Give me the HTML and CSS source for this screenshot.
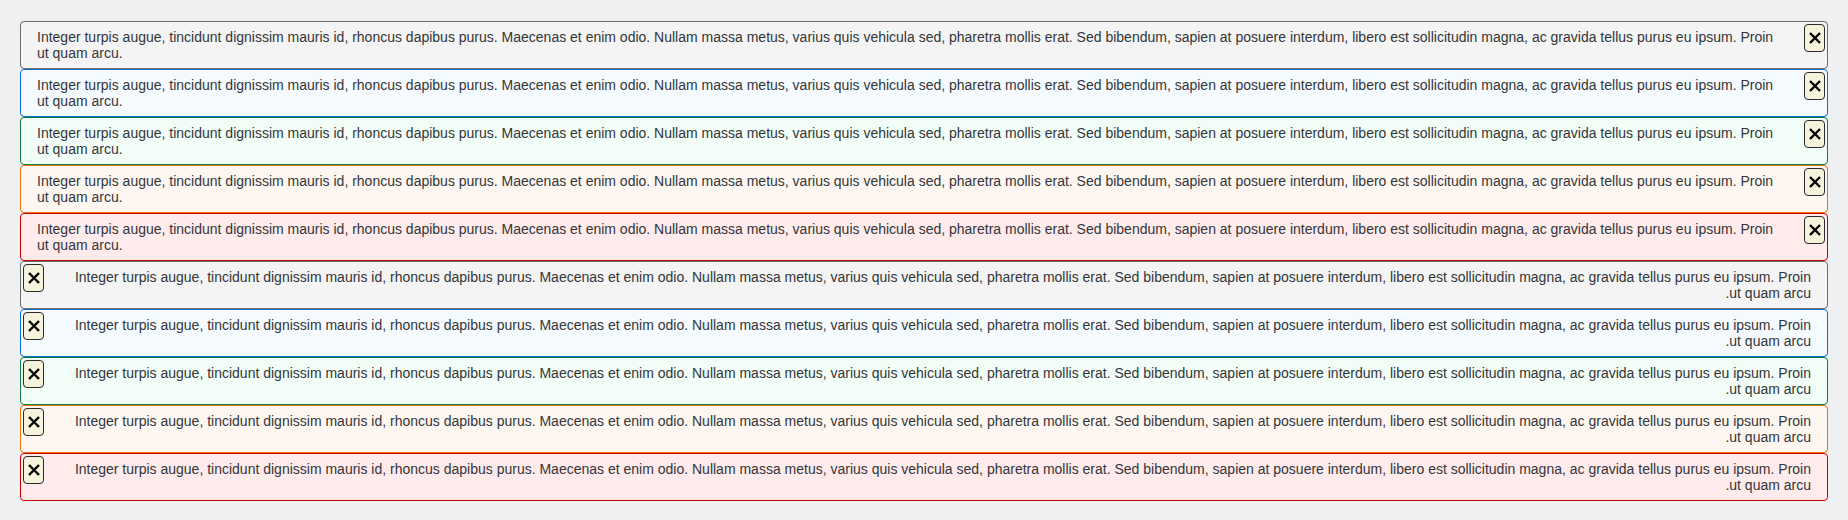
FILE: index.html
```html
<!DOCTYPE html>
<html lang="en">
<head>
<meta charset="utf-8">
<title>Message strips</title>
<link rel="stylesheet" href="styles.css">
</head>
<body>
<div class="page">
  <div class="strip neutral"><p class="text">Integer turpis augue, tincidunt dignissim mauris id, rhoncus dapibus purus. Maecenas et enim odio. Nullam massa metus, varius quis vehicula sed, pharetra mollis erat. Sed bibendum, sapien at posuere interdum, libero est sollicitudin magna, ac gravida tellus purus eu ipsum. Proin ut quam arcu.</p><button class="close" aria-label="Close"><svg viewBox="0 0 12 12" width="12" height="12"><path d="M1 1 L11 11 M11 1 L1 11" stroke="#000" stroke-width="2.4" fill="none"/></svg></button></div>
  <div class="strip info"><p class="text">Integer turpis augue, tincidunt dignissim mauris id, rhoncus dapibus purus. Maecenas et enim odio. Nullam massa metus, varius quis vehicula sed, pharetra mollis erat. Sed bibendum, sapien at posuere interdum, libero est sollicitudin magna, ac gravida tellus purus eu ipsum. Proin ut quam arcu.</p><button class="close" aria-label="Close"><svg viewBox="0 0 12 12" width="12" height="12"><path d="M1 1 L11 11 M11 1 L1 11" stroke="#000" stroke-width="2.4" fill="none"/></svg></button></div>
  <div class="strip success"><p class="text">Integer turpis augue, tincidunt dignissim mauris id, rhoncus dapibus purus. Maecenas et enim odio. Nullam massa metus, varius quis vehicula sed, pharetra mollis erat. Sed bibendum, sapien at posuere interdum, libero est sollicitudin magna, ac gravida tellus purus eu ipsum. Proin ut quam arcu.</p><button class="close" aria-label="Close"><svg viewBox="0 0 12 12" width="12" height="12"><path d="M1 1 L11 11 M11 1 L1 11" stroke="#000" stroke-width="2.4" fill="none"/></svg></button></div>
  <div class="strip warning"><p class="text">Integer turpis augue, tincidunt dignissim mauris id, rhoncus dapibus purus. Maecenas et enim odio. Nullam massa metus, varius quis vehicula sed, pharetra mollis erat. Sed bibendum, sapien at posuere interdum, libero est sollicitudin magna, ac gravida tellus purus eu ipsum. Proin ut quam arcu.</p><button class="close" aria-label="Close"><svg viewBox="0 0 12 12" width="12" height="12"><path d="M1 1 L11 11 M11 1 L1 11" stroke="#000" stroke-width="2.4" fill="none"/></svg></button></div>
  <div class="strip error"><p class="text">Integer turpis augue, tincidunt dignissim mauris id, rhoncus dapibus purus. Maecenas et enim odio. Nullam massa metus, varius quis vehicula sed, pharetra mollis erat. Sed bibendum, sapien at posuere interdum, libero est sollicitudin magna, ac gravida tellus purus eu ipsum. Proin ut quam arcu.</p><button class="close" aria-label="Close"><svg viewBox="0 0 12 12" width="12" height="12"><path d="M1 1 L11 11 M11 1 L1 11" stroke="#000" stroke-width="2.4" fill="none"/></svg></button></div>
  <div class="strip neutral rtl" dir="rtl"><p class="text">Integer turpis augue, tincidunt dignissim mauris id, rhoncus dapibus purus. Maecenas et enim odio. Nullam massa metus, varius quis vehicula sed, pharetra mollis erat. Sed bibendum, sapien at posuere interdum, libero est sollicitudin magna, ac gravida tellus purus eu ipsum. Proin ut quam arcu.</p><button class="close" aria-label="Close"><svg viewBox="0 0 12 12" width="12" height="12"><path d="M1 1 L11 11 M11 1 L1 11" stroke="#000" stroke-width="2.4" fill="none"/></svg></button></div>
  <div class="strip info rtl" dir="rtl"><p class="text">Integer turpis augue, tincidunt dignissim mauris id, rhoncus dapibus purus. Maecenas et enim odio. Nullam massa metus, varius quis vehicula sed, pharetra mollis erat. Sed bibendum, sapien at posuere interdum, libero est sollicitudin magna, ac gravida tellus purus eu ipsum. Proin ut quam arcu.</p><button class="close" aria-label="Close"><svg viewBox="0 0 12 12" width="12" height="12"><path d="M1 1 L11 11 M11 1 L1 11" stroke="#000" stroke-width="2.4" fill="none"/></svg></button></div>
  <div class="strip success rtl" dir="rtl"><p class="text">Integer turpis augue, tincidunt dignissim mauris id, rhoncus dapibus purus. Maecenas et enim odio. Nullam massa metus, varius quis vehicula sed, pharetra mollis erat. Sed bibendum, sapien at posuere interdum, libero est sollicitudin magna, ac gravida tellus purus eu ipsum. Proin ut quam arcu.</p><button class="close" aria-label="Close"><svg viewBox="0 0 12 12" width="12" height="12"><path d="M1 1 L11 11 M11 1 L1 11" stroke="#000" stroke-width="2.4" fill="none"/></svg></button></div>
  <div class="strip warning rtl" dir="rtl"><p class="text">Integer turpis augue, tincidunt dignissim mauris id, rhoncus dapibus purus. Maecenas et enim odio. Nullam massa metus, varius quis vehicula sed, pharetra mollis erat. Sed bibendum, sapien at posuere interdum, libero est sollicitudin magna, ac gravida tellus purus eu ipsum. Proin ut quam arcu.</p><button class="close" aria-label="Close"><svg viewBox="0 0 12 12" width="12" height="12"><path d="M1 1 L11 11 M11 1 L1 11" stroke="#000" stroke-width="2.4" fill="none"/></svg></button></div>
  <div class="strip error rtl" dir="rtl"><p class="text">Integer turpis augue, tincidunt dignissim mauris id, rhoncus dapibus purus. Maecenas et enim odio. Nullam massa metus, varius quis vehicula sed, pharetra mollis erat. Sed bibendum, sapien at posuere interdum, libero est sollicitudin magna, ac gravida tellus purus eu ipsum. Proin ut quam arcu.</p><button class="close" aria-label="Close"><svg viewBox="0 0 12 12" width="12" height="12"><path d="M1 1 L11 11 M11 1 L1 11" stroke="#000" stroke-width="2.4" fill="none"/></svg></button></div>
</div>
</body>
</html>
```

FILE: styles.css
```css
html, body {
  margin: 0;
  padding: 0;
  background: #eff0f2;
}

.page {
  padding: 21px 20px 20px;
  display: flex;
  flex-direction: column;
  font-family: "Liberation Sans", Arial, sans-serif;
  font-size: 14px;
  line-height: 16px;
  color: #32363a;
}

.strip {
  position: relative;
  box-sizing: border-box;
  border: 1px solid #6a6d70;
  border-radius: 4px;
  padding: 7px 40px 7px 16px;
  background: #f4f4f4;
}

.strip.rtl {
  padding: 7px 16px 7px 40px;
}

.text {
  margin: 0;
}

.neutral { background: #f4f4f4; border-color: #6a6d70; }
.info { background: #f5faff; border-color: #0a6ed1; }
.success { background: #f1fdf6; border-color: #107e3e; }
.warning { background: #fef7f1; border-color: #e9730c; }
.error { background: #ffebeb; border-color: #cc0000; }

.close {
  position: absolute;
  top: 2px;
  right: 2px;
  width: 21px;
  height: 28px;
  padding: 0;
  margin: 0;
  box-sizing: border-box;
  border: 1px solid #2b2b2b;
  border-radius: 4px;
  background: #f5f3db;
  display: flex;
  align-items: center;
  justify-content: center;
  cursor: pointer;
}

.rtl .close {
  right: auto;
  left: 2px;
}

.close svg {
  display: block;
}
```
